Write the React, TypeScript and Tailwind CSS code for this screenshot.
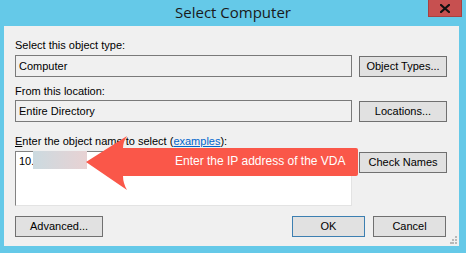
import React from "react";

const btn =
  "h-[21px] w-[88px] border border-[#707070] bg-[#e1e1e1] flex items-center justify-center text-[11px] text-black";

export default function App() {
  return (
    <div
      className="relative w-[466px] h-[253px] bg-[#65c9e8] overflow-hidden"
      style={{ fontFamily: '"Liberation Sans", Arial, sans-serif' }}
    >
      {/* title bar */}
      <div className="relative h-[26px] flex items-center justify-center">
        <span
          className="text-[15px] text-[#1a1a1a] mt-[-2px]"
          style={{ fontFamily: '"Open Sans", "Noto Sans", sans-serif' }}
        >
          Select Computer
        </span>
        <div className="absolute left-[428px] top-0 w-[34px] h-[17px] bg-[#c75050] border border-t-0 border-[#a84040] flex items-center justify-center">
          <svg width="10" height="9" viewBox="0 0 10 9">
            <path d="M1 1 L9 8 M9 1 L1 8" stroke="#111" strokeWidth="2.2" strokeLinecap="square" />
          </svg>
        </div>
      </div>

      {/* panel */}
      <div className="ml-[4px] w-[455px] h-[220px] bg-[#f0f0f0] flex flex-col pl-[11px] text-[11px] text-black leading-[13px]">
        <div className="mt-[13px] h-[13px]">Select this object type:</div>
        <div className="mt-[3px] flex items-start gap-[7px]">
          <div className="w-[337px] h-[22px] border border-[#7a7a7a] pl-[3px] flex items-center">Computer</div>
          <div className={btn + " mt-[1px]"}>Object Types...</div>
        </div>

        <div className="mt-[8px] h-[13px]">From this location:</div>
        <div className="mt-[2px] flex items-start gap-[7px]">
          <div className="w-[337px] h-[22px] border border-[#7a7a7a] pl-[3px] flex items-center">Entire Directory</div>
          <div className={btn + " mt-[1px]"}>Locations...</div>
        </div>

        <div className="mt-[13px] h-[13px]">
          <span className="underline">E</span>nter the object name to select (
          <span className="text-[#0066cc] underline">examples</span>):
        </div>
        <div className="mt-[3px] flex items-start gap-[7px]">
          <div className="relative w-[337px] h-[55px] bg-white border border-[#828282] border-r-[#e3e3e3] border-b-[#e3e3e3] pl-[3px] pt-[3px]">
            10.
            <div className="absolute left-[17px] top-[-1px] w-[54px] h-[18px] bg-gradient-to-r from-[#cbdae0] to-[#e8d2d3]" />
          </div>
          <div className={btn + " mt-[1px]"}>Check Names</div>
        </div>

        <div className="mt-[10px] flex items-start">
          <div className={btn + " mt-0"}>Advanced...</div>
          <div className="ml-[189px] h-[21px] w-[73px] border border-[#3c7fb1] bg-[#e1e1e1] flex items-center justify-center">OK</div>
          <div className="ml-[8px] h-[21px] w-[73px] border border-[#707070] bg-[#e1e1e1] flex items-center justify-center">Cancel</div>
        </div>
      </div>

      {/* resize grip */}
      <svg className="absolute left-[450px] top-[236px]" width="8" height="8" viewBox="0 0 8 8">
        <rect x="5" y="0" width="2" height="2" fill="#b8b8b8" />
        <rect x="2" y="3" width="2" height="2" fill="#b8b8b8" />
        <rect x="5" y="3" width="2" height="2" fill="#b8b8b8" />
        <rect x="0" y="6" width="2" height="2" fill="#b8b8b8" />
        <rect x="2" y="6" width="2" height="2" fill="#b8b8b8" />
        <rect x="5" y="6" width="2" height="2" fill="#b8b8b8" />
      </svg>

      {/* annotation arrow */}
      <svg className="absolute left-0 top-0 pointer-events-none" width="466" height="253" viewBox="0 0 466 253">
        <path
          d="M86 162 L127 136 Q123 142 123 148 L356 148 Q358 148 358 150 L358 174 Q358 176 356 176 L123 176 Q123 183 127 190 Z"
          fill="#fa5749"
        />
      </svg>
      <div className="absolute left-[175px] top-[154px] text-[12px] text-white leading-[14px]">
        Enter the IP address of the VDA
      </div>
    </div>
  );
}
